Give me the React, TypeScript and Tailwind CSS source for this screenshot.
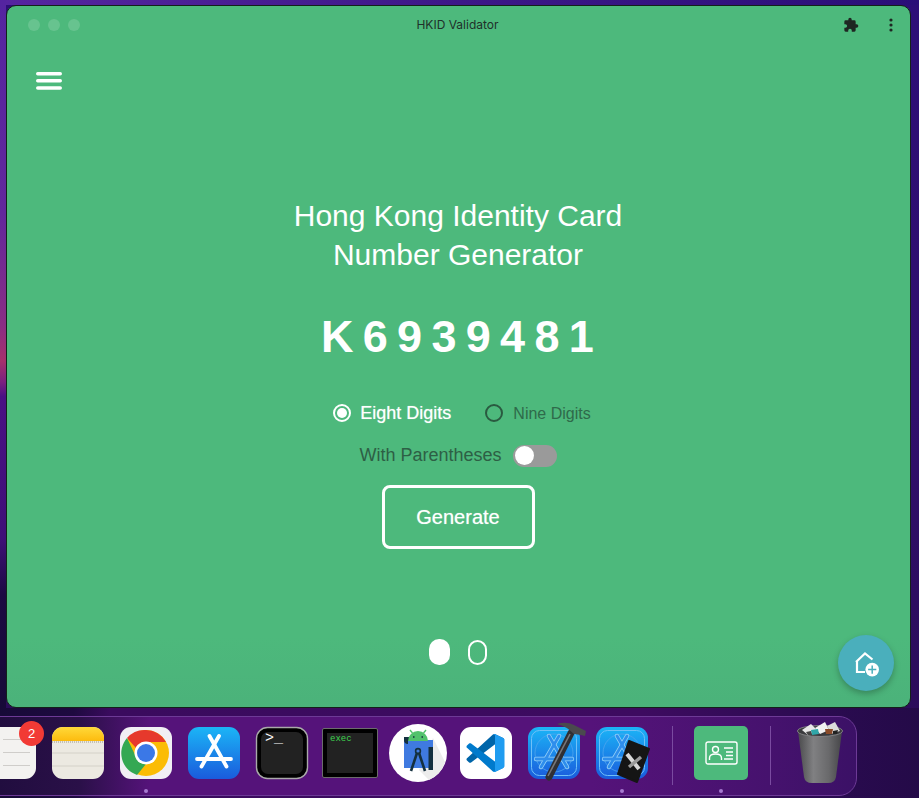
import React from "react";

const Slot = ({ children, dot }: { children: React.ReactNode; dot?: boolean }) => (
  <div className="relative w-[52px] h-[52px] shrink-0">
    {children}
    {dot && <span className="absolute left-[23.5px] top-[61.5px] w-[4px] h-[4px] rounded-full bg-[#a77ad0]" />}
  </div>
);

const Ico = ({ children, defs }: { children: React.ReactNode; defs?: React.ReactNode }) => (
  <svg viewBox="0 0 52 52" width="52" height="52" className="block overflow-visible">
    {defs && <defs>{defs}</defs>}
    {children}
  </svg>
);

const AppStoreA = () => (
  <g stroke="#fff" strokeWidth={3.8} strokeLinecap="round" fill="none">
    <path d="M31 9 L13.5 39.5" />
    <path d="M21.5 9 L38.5 39.5" />
    <path d="M9 32 H43" />
  </g>
);

const Chrome = () => (
  <Ico>
    <rect x="0" y="0" width="52" height="52" rx="11" fill="#f1eff4" />
    <circle cx="26" cy="26" r="23" fill="#fbbc05" />
    <path d="M26 3 A23 23 0 0 1 46 15 H26 A11 11 0 0 0 16 21 L7 11 A23 23 0 0 1 26 3Z" fill="#e6392c" />
    <path d="M7 11 L16.5 31 A11 11 0 0 0 26 37 L17 48 A23 23 0 0 1 7 11Z" fill="#34a853" />
    <circle cx="26" cy="26" r="11.5" fill="#fff" />
    <circle cx="26" cy="26" r="9" fill="#3b78e7" />
  </Ico>
);

const BlueIcon = ({ id, children }: { id: string; children: React.ReactNode }) => (
  <Ico
    defs={
      <linearGradient id={id} x1="0" y1="0" x2="0" y2="1">
        <stop offset="0" stopColor="#1bb5f6" />
        <stop offset="1" stopColor="#1a5bdc" />
      </linearGradient>
    }
  >
    <rect width="52" height="52" rx="11" fill={`url(#${id})`} />
    {children}
  </Ico>
);

const XcodeBase = () => (
  <g>
    <rect x="3.5" y="3.5" width="45" height="45" rx="8" fill="none" stroke="#6fc0f8" strokeWidth="1" />
    <circle cx="26" cy="26" r="19" fill="none" stroke="#4fa5ee" strokeWidth="0.8" />
    <g stroke="#98d2f8" strokeWidth="4.4" strokeLinecap="round" fill="none">
      <path d="M31 9 L13 40" />
      <path d="M21 9 L39 40" />
      <path d="M8 32 H44" />
    </g>
    <g stroke="#2f8eec" strokeWidth="2.8" strokeLinecap="round" fill="none">
      <path d="M31 9 L13 40" />
      <path d="M21 9 L39 40" />
      <path d="M8 32 H44" />
    </g>
  </g>
);

const Trash = () => (
  <svg viewBox="0 0 48 60" width="48" height="60" className="block overflow-visible">
    <defs>
      <linearGradient id="tr" x1="0" y1="0" x2="1" y2="0">
        <stop offset="0" stopColor="#4a4a4c" />
        <stop offset="0.35" stopColor="#808082" />
        <stop offset="0.7" stopColor="#69696b" />
        <stop offset="1" stopColor="#454548" />
      </linearGradient>
    </defs>
    <path d="M2 8 L46 8 L40 54 Q39 60 32 60 H16 Q9 60 8 54Z" fill="url(#tr)" />
    <ellipse cx="24" cy="8" rx="22.5" ry="5.5" fill="#3a3a3d" stroke="#8e8e90" strokeWidth="0.8" />
    <path d="M6 7 L15 1 L22 8 L12 12Z" fill="#e8e8e8" />
    <path d="M19 5 L29 -1 L33 7 L24 11Z" fill="#f2f2f2" />
    <path d="M31 3 L39 -1 L44 8 L35 11Z" fill="#dcdcdc" />
    <path d="M15 7 L22 6 L23 11 L16 12Z" fill="#2fa6a8" />
    <path d="M29 6 L37 6 L36 11 L30 11Z" fill="#8a4b2a" />
    <path d="M10 9 L15 8 L16 12 L12 12Z" fill="#444" />
    <path d="M37 8 L42 7 L41 11 L37 11Z" fill="#222" />
  </svg>
);

export default function App() {
  return (
    <div className="w-[919px] h-[798px] overflow-hidden font-['Liberation_Sans',sans-serif] [background:linear-gradient(180deg,#5424a0_0%,#62289c_30%,#8a2d84_46%,#a5306c_51%,#7a1f80_54%,#4a1184_56%,#3f0f78_76%,#1c0a42_84%,#170a38_100%)_0_0/6px_708px_no-repeat,linear-gradient(90deg,#5625a0_0%,#3d1888_50%,#2a0e78_100%)_0_0/100%_5px_no-repeat,linear-gradient(90deg,#170a38_0%,#1e0a40_8%,#3a0b5e_12%,#3d0b60_70%,#2a0b50_90%,#240a48_100%)_0_708px/100%_90px_no-repeat,linear-gradient(180deg,#2d0e78_0%,#300f6c_50%,#2a0b55_100%)]">
      {/* window */}
      <div className="ml-[6px] pt-[5px]">
        <div className="relative w-[905px] h-[703px] rounded-[10px] border border-[#14201a] bg-[linear-gradient(180deg,#4db97c_0%,#4db97c_90%,#4bb27a_100%)] flex flex-col">
          {/* title bar */}
          <div className="h-[38px] grid grid-cols-[1fr_auto_1fr] items-center pl-[21px] pr-[17px] shrink-0">
            <div className="flex gap-[8px]">
              <span className="w-[12px] h-[12px] rounded-full bg-white/15" />
              <span className="w-[12px] h-[12px] rounded-full bg-white/15" />
              <span className="w-[12px] h-[12px] rounded-full bg-white/15" />
            </div>
            <div className="text-[12px] text-[#20302a] font-['Inter',sans-serif] pr-[6px]">HKID Validator</div>
            <div className="flex items-center justify-end gap-[30px]">
              <svg width="16" height="16" viewBox="0 0 24 24" fill="#1e2622">
                <path d="M20.5 11H19V7a2 2 0 0 0-2-2h-4V3.5a2.5 2.5 0 0 0-5 0V5H4a2 2 0 0 0-2 2v3.8h1.5a2.7 2.7 0 0 1 0 5.4H2V20a2 2 0 0 0 2 2h3.8v-1.5a2.7 2.7 0 0 1 5.4 0V22H17a2 2 0 0 0 2-2v-4h1.5a2.5 2.5 0 0 0 0-5z" />
              </svg>
              <svg width="4" height="14" viewBox="0 0 4 14" fill="#1e2622">
                <circle cx="2" cy="2" r="1.6" />
                <circle cx="2" cy="7" r="1.6" />
                <circle cx="2" cy="12" r="1.6" />
              </svg>
            </div>
          </div>
          {/* hamburger */}
          <div className="pl-[29px] pt-[28px]">
            <svg width="26" height="18" viewBox="0 0 26 18" fill="#fff" className="block">
              <rect x="0" y="0" width="26" height="3.4" rx="1.7" />
              <rect x="0" y="7" width="26" height="3.4" rx="1.7" />
              <rect x="0" y="14.2" width="26" height="3.6" rx="1.8" />
            </svg>
          </div>
          {/* content */}
          <div className="flex flex-col items-center pt-[106px] pr-[2px]">
            <h1 className="ml-[1px] text-[30px] leading-[39px] text-white text-center">
              Hong Kong Identity Card
              <br />
              Number Generator
            </h1>
            <div className="mt-[37px] text-[45px] leading-[52px] font-bold text-white tracking-[9.3px] pl-[9px]">K6939481</div>
            <div className="mt-[38px] h-[24px] flex items-center pl-[9px]">
              <span className="w-[18px] h-[18px] rounded-full border-[2px] border-white flex items-center justify-center">
                <span className="w-[10px] h-[10px] rounded-full bg-white" />
              </span>
              <span className="ml-[9px] pt-[1px] text-[18px] text-white [text-shadow:0_0_1px_rgba(255,255,255,0.6)]">Eight Digits</span>
              <span className="ml-[34px] w-[18px] h-[18px] rounded-full border-[2px] border-[#2a5a40]" />
              <span className="ml-[10px] pt-[1px] text-[16px] text-[#2f6a4a]">Nine Digits</span>
            </div>
            <div className="mt-[19px] h-[23px] flex items-center pl-[1px]">
              <span className="text-[18px] text-[#2d5f45]">With Parentheses</span>
              <span className="ml-[11px] w-[44px] h-[22px] rounded-full bg-[#9a9a9a] flex items-center pl-[2px]">
                <span className="w-[19px] h-[19px] rounded-full bg-white" />
              </span>
            </div>
            <button className="mt-[18px] ml-[1px] w-[153px] h-[64px] rounded-[8px] border-[3px] border-white text-[20px] text-white bg-transparent [text-shadow:0_0_1px_rgba(255,255,255,0.6)]">Generate</button>
            <div className="mt-[90px] flex items-center gap-[18px] pl-[1px]">
              <span className="w-[21px] h-[26px] rounded-[10px] bg-white" />
              <span className="w-[19px] h-[25px] rounded-[10px] border-[2px] border-white" />
            </div>
          </div>
          {/* FAB */}
          <div className="absolute left-[831px] top-[629px] w-[56px] h-[56px] rounded-full bg-[#4aafbc] shadow-[0_3px_6px_rgba(0,0,0,0.25)] flex items-center justify-center">
            <svg width="28" height="28" viewBox="0 0 28 28" fill="none">
              <path d="M4 13 L13 4.5 L20.5 10.5 M5 11.5 V23 H13" stroke="#fff" strokeWidth="2.2" />
              <circle cx="20.2" cy="20.6" r="6.8" fill="#fff" />
              <path d="M20.2 16.5 V24.7 M16.1 20.6 H24.3" stroke="#4aafbc" strokeWidth="1.5" />
            </svg>
          </div>
        </div>
      </div>

      {/* dock */}
      <div className="mt-[8px] ml-[-28px] w-[885px] h-[80px] rounded-[18px] border border-[#6d3a96] bg-[linear-gradient(90deg,#1e0c3c_0%,#2a1048_12%,#55137a_20%,#55137a_70%,#46126e_90%,#3b1166_100%)] flex items-start pt-[10px] pl-[11px]">
        <div className="flex gap-[16px]">
          <Slot>
            <Ico>
              <rect width="52" height="52" rx="11" fill="#f3f2f0" />
              <path d="M19 12.5 H46 M19 25.5 H46 M19 38.5 H46" stroke="#cfcdca" strokeWidth="1.2" />
            </Ico>
            <span className="absolute left-[35px] top-[-6px] w-[25px] h-[25px] rounded-full bg-[#f23a35] text-white text-[13px] flex items-center justify-center">2</span>
          </Slot>
          <Slot>
            <Ico
              defs={
                <linearGradient id="nt" x1="0" y1="0" x2="0" y2="1">
                  <stop offset="0" stopColor="#ffd93a" />
                  <stop offset="1" stopColor="#fdbb0e" />
                </linearGradient>
              }
            >
              <rect width="52" height="52" rx="11" fill="#ece9e1" />
              <path d="M0 14 V11 A11 11 0 0 1 11 0 H41 A11 11 0 0 1 52 11 V14 Z" fill="url(#nt)" />
              <path d="M0 15 H52" stroke="#b5b2a8" strokeWidth="1.4" strokeDasharray="1 1" />
              <path d="M0 26 H52 M0 39 H52" stroke="#d4d1c8" strokeWidth="1" />
            </Ico>
          </Slot>
          <Slot dot>
            <Chrome />
          </Slot>
          <Slot>
            <BlueIcon id="as1">
              <AppStoreA />
            </BlueIcon>
          </Slot>
          <Slot>
            <Ico>
              <rect x="0.5" y="0.5" width="51" height="51" rx="11" fill="#000" stroke="#a9a9a9" strokeWidth="1.4" />
              <rect x="5" y="5" width="42" height="42" rx="7" fill="#222" />
            </Ico>
            <span className="absolute left-[9px] top-[3px] text-[15px] leading-[18px] text-white font-['Liberation_Mono',monospace] whitespace-pre">{">_"}</span>
          </Slot>
          <Slot>
            <div className="absolute left-[-2px] top-[1px] w-[56px] h-[50px] rounded-[2px] bg-black border border-[#6c6c6c] p-[4px]">
              <div className="w-full h-full bg-[#222] text-[9px] leading-[10px] text-[#3ed44f] font-['Liberation_Mono',monospace] pl-[3px] pt-[1px]">exec</div>
            </div>
          </Slot>
          <Slot>
            <svg viewBox="0 0 58 58" width="58" height="58" className="absolute left-[-3px] top-[-3px] overflow-visible">
              <circle cx="29" cy="29" r="29" fill="#fff" />
              <path d="M44 14 L56 38 A29 29 0 0 1 40 56 L30 46Z" fill="#ececec" />
              <path d="M21 6 L23.5 9 M37 6 L34.5 9" stroke="#52c26c" strokeWidth="1.4" />
              <path d="M15 16 H44 V44 H15Z" fill="#3f7ae0" />
              <path d="M15 13 H24 V17 H19 V20 Q15 20 15 16Z" fill="#14303f" />
              <path d="M19 17 A10 10 0 0 1 39 17Z" fill="#52c26c" />
              <path d="M24 13 h1.5 M32.5 13 h1.5" stroke="#14303f" strokeWidth="1.4" />
              <g stroke="#14303f" strokeWidth="2.6" fill="none">
                <circle cx="29" cy="27" r="2.4" strokeWidth="1.6" />
                <path d="M28 29 L22 47 M30 29 L36 47" />
              </g>
              <path d="M39.5 23 H44 V46 H39.5Z" fill="#14303f" />
            </svg>
          </Slot>
          <Slot>
            <Ico>
              <rect width="52" height="52" rx="11" fill="#fff" />
              <g transform="translate(6.5 7) scale(0.38)">
                <path d="M96.4614 10.7962L75.8569 0.875542C73.4719 -0.272773 70.6217 0.211611 68.75 2.08333L1.29858 63.5832C-0.515693 65.2373 -0.513607 68.0937 1.30308 69.7452L6.81272 74.754C8.29793 76.1042 10.5347 76.2036 12.1338 74.9905L93.3609 13.3699C96.086 11.3026 100 13.2462 100 16.6667V16.4275C100 14.0265 98.6246 11.8378 96.4614 10.7962Z" fill="#0065A9" />
                <path d="M96.4614 89.2038L75.8569 99.1245C73.4719 100.273 70.6217 99.7884 68.75 97.9167L1.29858 36.4169C-0.515693 34.7627 -0.513607 31.9063 1.30308 30.2548L6.81272 25.246C8.29793 23.8958 10.5347 23.7964 12.1338 25.0095L93.3609 86.6301C96.086 88.6974 100 86.7538 100 83.3334V83.5726C100 85.9735 98.6246 88.1622 96.4614 89.2038Z" fill="#007ACC" />
                <path d="M75.8578 99.1263C73.4721 100.274 70.6219 99.7885 68.75 97.9166C71.0564 100.223 75 98.5895 75 95.3278V4.67213C75 1.41039 71.0564 -0.223106 68.75 2.08329C70.6219 0.211402 73.4721 -0.273666 75.8578 0.873633L96.4587 10.7807C98.6234 11.8217 100 14.0112 100 16.4132V83.5871C100 85.9891 98.6234 88.1786 96.4586 89.2196L75.8578 99.1263Z" fill="#1F9CF0" />
              </g>
            </Ico>
          </Slot>
          <Slot>
            <BlueIcon id="as2">
              <XcodeBase />
              <g>
                <path d="M43 6 L21 50" stroke="#303034" strokeWidth="7" strokeLinecap="round" />
                <path d="M42 7 L20 49" stroke="#77777b" strokeWidth="1.6" />
                <path d="M29 -3 Q38 -6 46 -2 L58 4 L57 9 L53 8 L46 7 Q38 -1 29 -3Z" fill="#4a4a4e" />
              </g>
            </BlueIcon>
          </Slot>
          <Slot dot>
            <BlueIcon id="as3">
              <XcodeBase />
              <path d="M33 14 L53 22 L41 55 L22 47Z" fill="#151515" stroke="#151515" strokeWidth="2" strokeLinejoin="round" />
              <path d="M31 27 L43 42" stroke="#d8d8d8" strokeWidth="4" />
              <path d="M45 30 L33 40" stroke="#9a9a9a" strokeWidth="3.4" />
            </BlueIcon>
          </Slot>
        </div>
        <div className="ml-[24px] mt-[-1px] w-px h-[59px] bg-[#7a4ba0]" />
        <div className="ml-[21px] relative w-[54px] h-[54px] mt-[-1px] rounded-[5px] bg-[#4db97c] flex items-center justify-center">
          <svg width="33" height="24" viewBox="0 0 33 24" fill="none" stroke="#fff" strokeWidth="1.4">
            <rect x="1" y="1" width="31" height="22" rx="2" />
            <circle cx="10.5" cy="8.5" r="3" />
            <path d="M4.5 19 V17 Q4.5 13 10.5 13 Q16.5 13 16.5 17 V19" />
            <path d="M19 7 H28 M21 11 H28 M21 14.5 H28 M19 18 H28" />
          </svg>
          <span className="absolute left-[25px] top-[62.5px] w-[4px] h-[4px] rounded-full bg-[#a77ad0]" />
        </div>
        <div className="ml-[22px] mt-[-1px] w-px h-[59px] bg-[#7a4ba0]" />
        <div className="ml-[25px] mt-[-4px] w-[48px] h-[60px] shrink-0">
          <Trash />
        </div>
      </div>
    </div>
  );
}
